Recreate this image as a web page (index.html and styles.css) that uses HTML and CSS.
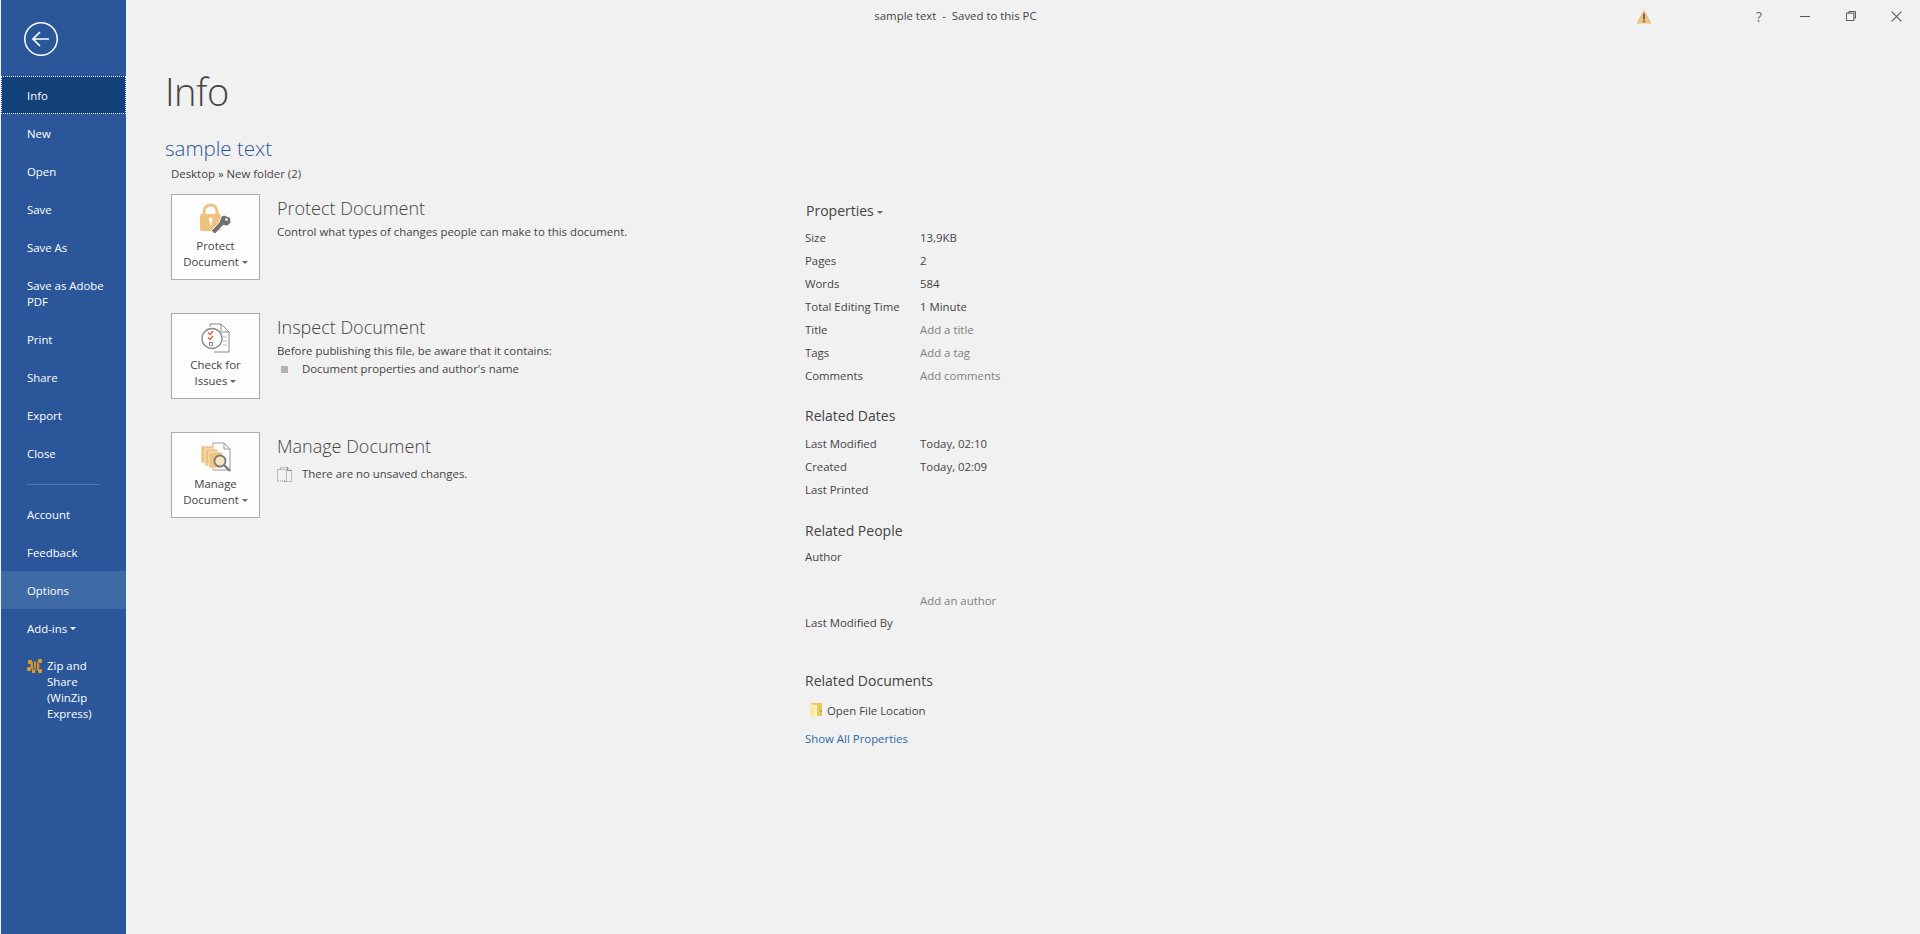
FILE: index.html
```html
<!DOCTYPE html>
<html lang="en">
<head>
<meta charset="utf-8">
<title>sample text - Saved to this PC</title>
<link rel="stylesheet" href="styles.css">
</head>
<body>
<div class="app">
  <nav class="sidebar">
    <div class="back">
      <svg width="36" height="36" viewBox="0 0 36 36"><circle cx="18" cy="18" r="16.2" fill="none" stroke="#fff" stroke-width="1.5"/><path d="M26 18H10M17 11l-7 7 7 7" fill="none" stroke="#fff" stroke-width="1.7"/></svg>
    </div>
    <a class="nav-item active">Info</a>
    <a class="nav-item">New</a>
    <a class="nav-item">Open</a>
    <a class="nav-item">Save</a>
    <a class="nav-item">Save As</a>
    <a class="nav-item tall">Save as Adobe PDF</a>
    <a class="nav-item">Print</a>
    <a class="nav-item">Share</a>
    <a class="nav-item">Export</a>
    <a class="nav-item">Close</a>
    <div class="nav-divider"></div>
    <a class="nav-item">Account</a>
    <a class="nav-item">Feedback</a>
    <a class="nav-item hover">Options</a>
    <a class="nav-item">Add-ins<span class="caret light"></span></a>
    <a class="nav-item zip">
      <svg class="zip-icon" width="16" height="16" viewBox="0 0 16 16"><g fill="#e09a1c"><circle cx="8" cy="8" r="4.500"/><rect x="1" y="2" width="4" height="4" rx="1"/><rect x="11" y="1" width="4" height="4" rx="1"/><rect x="0" y="9" width="4" height="4" rx="1"/><rect x="11" y="11" width="4" height="4" rx="1"/><rect x="5" y="12" width="3" height="3"/></g><path d="M6.500 4v7h3V4" fill="none" stroke="#2b579a" stroke-width="1.200"/></svg>
      <span>Zip and Share (WinZip Express)</span>
    </a>
  </nav>

  <div class="content">
    <header class="titlebar">
      <div class="doc-title">sample text &nbsp;-&nbsp; Saved to this PC</div>
      <div class="warn">
        <svg width="16" height="15" viewBox="0 0 16 15"><path d="M8 .5L15.500 14.500H.5z" fill="#eec27f"/><path d="M7.200 4.500h1.600v6H7.200zM7.200 11.500h1.600v1.700H7.200z" fill="#555"/></svg>
      </div>
      <div class="win-btn help">?</div>
      <div class="win-btn"><svg width="12" height="12" viewBox="0 0 12 12"><path d="M1 6.500h10" stroke="#555" stroke-width="1"/></svg></div>
      <div class="win-btn"><svg width="10" height="10" viewBox="0 0 12 12"><path d="M3.500 2.500V.5h8v8h-2" fill="none" stroke="#555" stroke-width="1.200"/><rect x=".5" y="2.500" width="9" height="9" fill="none" stroke="#555" stroke-width="1.200"/></svg></div>
      <div class="win-btn close"><svg width="11" height="11" viewBox="0 0 12 12"><path d="M.7.7l10.600 10.600M11.300.7L.7 11.300" stroke="#555" stroke-width="1.200"/></svg></div>
    </header>

    <main class="page">
      <h1 class="page-title">Info</h1>
      <h2 class="doc-name">sample text</h2>
      <div class="doc-path">Desktop » New folder (2)</div>

      <div class="columns">
        <section class="actions">
          <article class="action">
            <button class="action-btn">
              <svg width="31" height="32" viewBox="0 0 31 32"><path d="M2.500 12V8.500a8 8 0 0 1 16 0V12h-3V8.500a5 5 0 0 0-10 0V12z" fill="#eec27f"/><rect x="0" y="11" width="21" height="17" rx="2" fill="#eec27f"/><circle cx="10.700" cy="16.500" r="2" fill="#fff"/><rect x="9.900" y="17" width="1.600" height="5" fill="#fff"/><path d="M21 13.500l3-1.500 6.500 2.500.5 5-3.500 3.500-4.500-.5-7.500 8-2.500-.5-1.500-2.500 7.500-8z" fill="#707070" stroke="#fdfdfd" stroke-width="1"/><circle cx="26.500" cy="16.500" r="1.300" fill="#fdfdfd"/></svg>
              <span class="btn-label">Protect<br>Document<span class="caret"></span></span>
            </button>
            <div class="action-text">
              <h3>Protect Document</h3>
              <p>Control what types of changes people can make to this document.</p>
            </div>
          </article>

          <article class="action">
            <button class="action-btn">
              <svg width="30" height="30" viewBox="0 0 30 30"><path d="M9 4V1h11l8 8v20H13" fill="#fff" stroke="#8a8a8a"/><path d="M20 1v8h8" fill="none" stroke="#8a8a8a"/><path d="M22 14h4M22 18h4M22 22h4" stroke="#bbb"/><circle cx="11" cy="15.500" r="10" fill="#fff" stroke="#8a8a8a" stroke-width="1.300"/><path d="M7 9.500l2 2 3-3.500M7 14.500l2 2 3-3.500" fill="none" stroke="#e0603a" stroke-width="1.300"/><rect x="8.500" y="19.500" width="3" height="3" fill="none" stroke="#8a8a8a"/></svg>
              <span class="btn-label">Check for<br>Issues<span class="caret"></span></span>
            </button>
            <div class="action-text">
              <h3>Inspect Document</h3>
              <p>Before publishing this file, be aware that it contains:</p>
              <div class="bullet-row"><span class="bullet"></span>Document properties and author's name</div>
            </div>
          </article>

          <article class="action">
            <button class="action-btn">
              <svg width="32" height="30" viewBox="0 0 32 30"><path d="M13 1h11l6 6v21H13z" fill="#fff" stroke="#999"/><path d="M24 1v6h6" fill="none" stroke="#999"/><rect x="1" y="4" width="13" height="17" fill="#eec27f" stroke="#fff" stroke-width=".6"/><rect x="5" y="7" width="13" height="17" fill="#eec27f" stroke="#fff" stroke-width=".6"/><rect x="9" y="10" width="13" height="16" fill="#eec27f" stroke="#fff" stroke-width=".6"/><circle cx="20" cy="19" r="5.500" fill="#f5e3c2" stroke="#7a7a7a" stroke-width="1.800"/><path d="M24 23l6 6" stroke="#7a7a7a" stroke-width="2.400"/></svg>
              <span class="btn-label">Manage<br>Document<span class="caret"></span></span>
            </button>
            <div class="action-text">
              <h3>Manage Document</h3>
              <div class="unsaved-row">
                <svg width="15" height="15" viewBox="0 0 15 15"><path d="M3.500 2.500v-2h7l4 3v11h-9" fill="none" stroke="#888" stroke-dasharray="1 1"/><path d="M10.500.5v3h4" fill="none" stroke="#888"/><rect x=".5" y="2.500" width="9" height="11.500" fill="none" stroke="#888" stroke-dasharray="1 1"/></svg>
                <span>There are no unsaved changes.</span>
              </div>
            </div>
          </article>
        </section>

        <aside class="props">
          <h4 class="group-title first">Properties<span class="caret"></span></h4>
          <dl class="prop-list">
            <div><dt>Size</dt><dd>13,9KB</dd></div>
            <div><dt>Pages</dt><dd>2</dd></div>
            <div><dt>Words</dt><dd>584</dd></div>
            <div><dt>Total Editing Time</dt><dd>1 Minute</dd></div>
            <div><dt>Title</dt><dd class="muted">Add a title</dd></div>
            <div><dt>Tags</dt><dd class="muted">Add a tag</dd></div>
            <div><dt>Comments</dt><dd class="muted">Add comments</dd></div>
          </dl>
          <h4 class="group-title dates">Related Dates</h4>
          <dl class="prop-list">
            <div><dt>Last Modified</dt><dd>Today, 02:10</dd></div>
            <div><dt>Created</dt><dd>Today, 02:09</dd></div>
            <div><dt>Last Printed</dt><dd></dd></div>
          </dl>
          <h4 class="group-title people">Related People</h4>
          <dl class="prop-list">
            <div><dt>Author</dt><dd></dd></div>
            <div class="add-author"><dt></dt><dd class="muted">Add an author</dd></div>
            <div><dt>Last Modified By</dt><dd></dd></div>
          </dl>
          <h4 class="group-title docs">Related Documents</h4>
          <div class="open-loc">
            <svg width="14" height="16" viewBox="0 0 14 16"><path d="M1 1h12v13H1z" fill="#e8c65a"/><path d="M1 1l5 2v13l-5-2z" fill="#f7eba8"/><path d="M6 3h2v11H6z" fill="#fdf6c9"/><rect x="11.500" y="8" width="1" height="2" fill="#5b8fc9"/></svg>
            <span>Open File Location</span>
          </div>
          <a class="show-all">Show All Properties</a>
        </aside>
      </div>
    </main>
  </div>
</div>
</body>
</html>
```
FILE: styles.css
```css
* { box-sizing: border-box; }
html, body { margin: 0; height: 100%; }
body {
  font-family: "Open Sans", "Noto Sans", sans-serif;
  font-size: 11.4px;
  color: #444;
  background: #f1f1f1;
  overflow: hidden;
}
.app { display: flex; height: 934px; }

.sidebar {
  width: 125px;
  margin-left: 1px;
  flex: none;
  background: #2b579a;
  color: #fff;
  display: flex;
  flex-direction: column;
}
.back { height: 76px; padding: 21px 0 0 22px; }
.back svg { display: block; }
.nav-item {
  display: flex;
  align-items: center;
  min-height: 38px;
  padding: 1px 16px 0 26px;
  line-height: 16px;
  color: #fff;
}
.nav-item.tall { min-height: 54px; }
.nav-item.active {
  background: #124078;
  outline: 1px dotted #fff;
  outline-offset: -1px;
}
.nav-item.hover { background: #3e6aa6; }
.nav-divider {
  height: 1px;
  margin: 12px 26px 10px;
  background: #5078b0;
}
.nav-item.zip { align-items: flex-start; padding: 11px 16px 0 26px; }
.zip-icon { flex: none; margin-right: 4px; }

.caret {
  display: inline-block;
  margin-left: 3px;
  vertical-align: middle;
  border-left: 3px solid transparent;
  border-right: 3px solid transparent;
  border-top: 3px solid #666;
}
.caret.light { border-top-color: #fff; }

.content { flex: 1; min-width: 0; display: flex; flex-direction: column; }
.titlebar { height: 32px; display: flex; align-items: center; flex: none; }
.doc-title { width: 1510px; padding-left: 149px; text-align: center; line-height: 16px; }
.warn { width: 100px; }
.warn svg { display: block; }
.win-btn {
  width: 46px;
  height: 32px;
  display: flex;
  align-items: center;
  justify-content: center;
  color: #666;
}
.win-btn.close { width: 45px; }
.win-btn.help { font-size: 14px; }

.page { padding: 29px 0 0 39px; }
.page-title {
  margin: 0;
  font-size: 38px;
  font-weight: 300;
  line-height: 52px;
  color: #444;
  letter-spacing: -.5px;
  padding-top: 4px;
}
.doc-name {
  margin: 18px 0 0;
  font-size: 20.5px;
  font-weight: 300;
  line-height: 26px;
  color: #2b579a;
}
.doc-path { margin: 5px 0 0 6px; line-height: 16px; height: 16px; }

.columns { display: flex; margin: 12px 0 0 6px; }
.actions { width: 634px; flex: none; display: flex; flex-direction: column; gap: 33px; }
.action { display: flex; height: 86px; }
.action-btn {
  width: 89px;
  height: 86px;
  flex: none;
  padding: 8px 0 0;
  background: #fdfdfd;
  border: 1px solid #ababab;
  font: inherit;
  color: #444;
  display: flex;
  flex-direction: column;
  align-items: center;
}
.action-btn svg { flex: none; height: 32px; }
.btn-label { display: block; margin-top: 3px; line-height: 16px; text-align: center; }
.action-text { margin-left: 17px; }
.action-text h3 {
  margin: 0;
  font-size: 18px;
  font-weight: 300;
  line-height: 28px;
  color: #444;
}
.action-text p { margin: 1px 0 0; line-height: 17px; }
.bullet-row { display: flex; align-items: center; margin-top: 2px; line-height: 16px; }
.bullet { width: 7px; height: 7px; background: #b2b2b2; margin: 0 14px 0 4px; }
.unsaved-row { display: flex; align-items: center; margin-top: 6px; line-height: 16px; }
.unsaved-row svg { margin-right: 10px; }

.group-title {
  margin: 0;
  font-size: 14px;
  font-weight: 400;
  line-height: 20px;
  color: #444;
}
.group-title.first { margin: 7px 0 5px 1px; }
.group-title.dates { margin: 19px 0 6px; }
.group-title.people { margin: 20px 0 4px; }
.group-title.docs { margin: 37px 0 7px; }
.prop-list { margin: 0; }
.prop-list > div { display: flex; height: 23px; align-items: center; }
.prop-list dt { width: 115px; flex: none; }
.prop-list dd { margin: 0; }
.muted { color: #808080; }
.prop-list > .add-author { height: 43px; padding-top: 21px; }
.open-loc { display: flex; align-items: center; height: 24px; padding-left: 4px; }
.open-loc span { margin-left: 4px; }
.show-all { display: block; margin-top: 9px; line-height: 16px; color: #2b6aa8; }
```
